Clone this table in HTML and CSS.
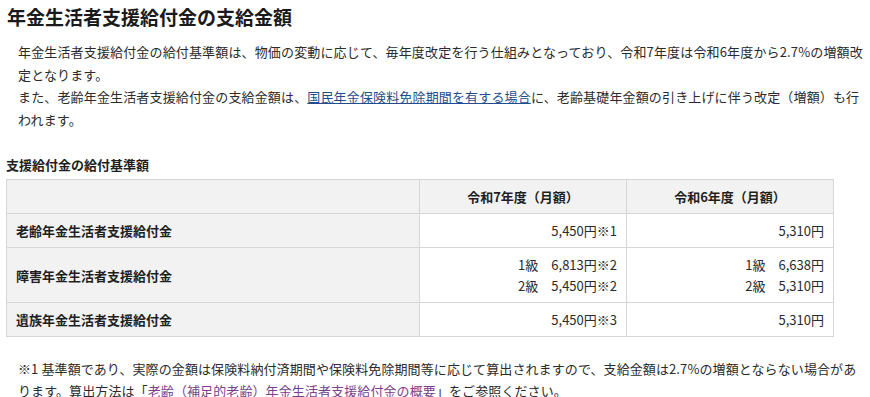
FILE: index.html
```html
<!DOCTYPE html>
<html lang="ja">
<head>
<meta charset="utf-8">
<title>年金生活者支援給付金の支給金額</title>
<link rel="stylesheet" href="styles.css">
</head>
<body>
<div class="page">
  <h1 class="title">年金生活者支援給付金の支給金額</h1>
  <div class="lead">
    <p class="lead-line">年金生活者支援給付金の給付基準額は、物価の変動に応じて、毎年度改定を行う仕組みとなっており、令和7年度は令和6年度から2.7%の増額改定となります。</p>
    <p class="lead-line">また、老齢年金生活者支援給付金の支給金額は、<a class="link" href="#">国民年金保険料免除期間を有する場合</a>に、老齢基礎年金額の引き上げに伴う改定（増額）も行われます。</p>
  </div>
  <h2 class="subtitle">支援給付金の給付基準額</h2>
  <table class="amounts">
    <thead>
      <tr>
        <th class="corner"></th>
        <th class="col-head">令和7年度（月額）</th>
        <th class="col-head">令和6年度（月額）</th>
      </tr>
    </thead>
    <tbody>
      <tr>
        <th class="row-head">老齢年金生活者支援給付金</th>
        <td class="num">5,450円※1</td>
        <td class="num">5,310円</td>
      </tr>
      <tr>
        <th class="row-head">障害年金生活者支援給付金</th>
        <td class="num">1級　6,813円※2<br>2級　5,450円※2</td>
        <td class="num">1級　6,638円<br>2級　5,310円</td>
      </tr>
      <tr>
        <th class="row-head">遺族年金生活者支援給付金</th>
        <td class="num">5,450円※3</td>
        <td class="num">5,310円</td>
      </tr>
    </tbody>
  </table>
  <p class="note">※1 基準額であり、実際の金額は保険料納付済期間や保険料免除期間等に応じて算出されますので、支給金額は2.7%の増額とならない場合があります。算出方法は「<a class="link visited" href="#">老齢（補足的老齢）年金生活者支援給付金の概要</a>」をご参照ください。</p>
</div>
</body>
</html>
```

FILE: styles.css
```css
html, body {
  margin: 0;
  padding: 0;
  background: #ffffff;
}

body {
  font-family: "Noto Sans CJK JP", "Noto Sans", sans-serif;
  color: #2b2b2b;
  font-size: 13px;
}

.page {
  padding: 0 6px;
  width: 858px;
}

.title {
  margin: 0;
  padding-top: 4px;
  padding-left: 1px;
  font-size: 19px;
  line-height: 26px;
  font-weight: bold;
  color: #1a1a1a;
}

.lead {
  margin: 11px 0 0 12px;
}

.lead-line {
  margin: 0;
  line-height: 22.5px;
  font-size: 13px;
  letter-spacing: 0.15px;
}

.link {
  color: #1f4e8c;
  text-decoration: underline;
}

.link.visited {
  color: #7b3f8c;
}

.subtitle {
  margin: 24px 0 0;
  font-size: 13px;
  line-height: 20px;
  font-weight: bold;
  color: #1f1f1f;
}

.amounts {
  margin-top: 4px;
  width: 827px;
  border-collapse: collapse;
  table-layout: fixed;
}

.amounts th,
.amounts td {
  box-sizing: border-box;
  border: 1px solid #d6d6d6;
  padding: 6px 9px;
  line-height: 21px;
  font-size: 13px;
  vertical-align: middle;
}

.corner,
.col-head,
.row-head {
  background: #f2f2f2;
  font-weight: bold;
  color: #1f1f1f;
}

.corner {
  width: 413px;
}

.col-head {
  width: 207px;
  text-align: center;
}

.row-head {
  text-align: left;
}

.num {
  text-align: right;
  color: #2b2b2b;
}

.note {
  margin: 21px 0 0 12px;
  line-height: 22px;
  font-size: 13px;
  letter-spacing: 0.1px;
}
```
